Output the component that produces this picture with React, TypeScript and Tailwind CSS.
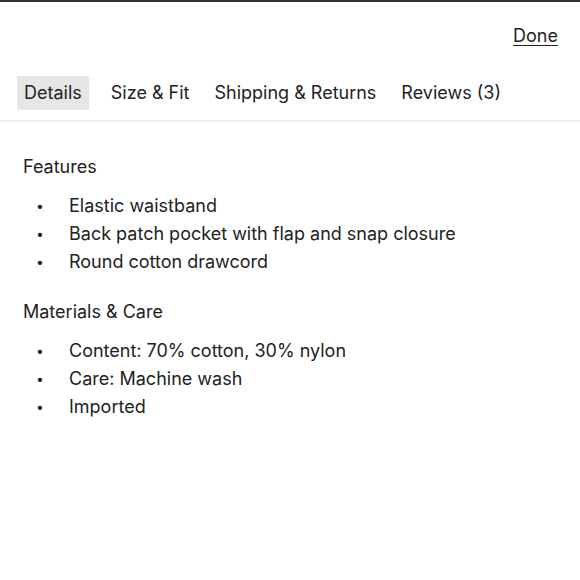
const TABS = ['Details', 'Size & Fit', 'Shipping & Returns', 'Reviews (3)']

const SECTIONS = [
  {
    title: 'Features',
    items: ['Elastic waistband', 'Back patch pocket with flap and snap closure', 'Round cotton drawcord'],
  },
  {
    title: 'Materials & Care',
    items: ['Content: 70% cotton, 30% nylon', 'Care: Machine wash', 'Imported'],
  },
]

export default function App() {
  return (
    <div className="w-[580px] h-[580px] bg-white border-t-2 border-[#333] text-[#222] font-['Inter',sans-serif] text-[18px]">
      <div className="flex justify-end pr-[22px] pt-[22px]">
        <button type="button" className="underline underline-offset-[3px] leading-[24px]">
          Done
        </button>
      </div>

      <div className="mt-[28px] flex items-center gap-[11px] pl-[17px] pb-[10px] border-b-2 border-[#eeeeee]">
        {TABS.map((tab, i) => (
          <button
            key={tab}
            type="button"
            className={`px-[7px] h-[34px] leading-[34px] ${i === 0 ? 'bg-[#e6e6e6] mr-[4px]' : ''}`}
          >
            {tab}
          </button>
        ))}
      </div>

      <div className="pl-[23px] pt-[33px]">
        {SECTIONS.map((s) => (
          <div key={s.title} className="mb-[24px]">
            <h3 className="leading-[24px]">{s.title}</h3>
            <ul className="mt-[13px]">
              {s.items.map((item) => (
                <li key={item} className="flex leading-[28px]">
                  <span className="w-[46px] pl-[13px] text-[14px]">•</span>
                  <span>{item}</span>
                </li>
              ))}
            </ul>
          </div>
        ))}
      </div>
    </div>
  )
}
